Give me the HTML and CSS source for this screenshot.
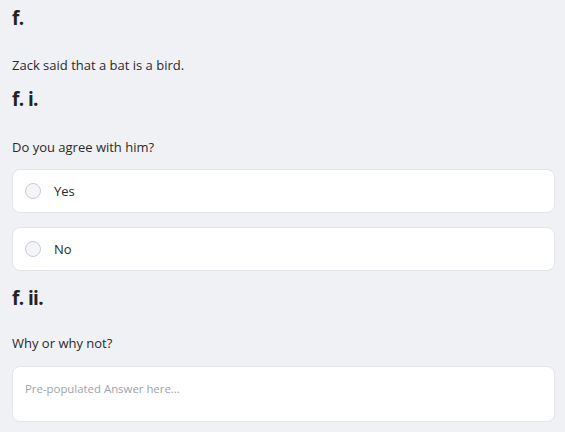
FILE: index.html
```html
<!DOCTYPE html>
<html>
<head>
<meta charset="utf-8">
<link rel="stylesheet" href="styles.css">
</head>
<body>
<div class="page">
  <h2 class="label">f.</h2>
  <p class="text text-intro">Zack said that a bat is a bird.</p>
  <h2 class="label label-sub">f. i.</h2>
  <p class="text text-q">Do you agree with him?</p>
  <div class="options">
    <label class="option"><span class="radio"></span><span class="opt-text">Yes</span></label>
    <label class="option"><span class="radio"></span><span class="opt-text">No</span></label>
  </div>
  <h2 class="label label-sub2">f. ii.</h2>
  <p class="text text-q2">Why or why not?</p>
  <div class="answer"><span class="placeholder">Pre-populated Answer here...</span></div>
</div>
</body>
</html>
```
FILE: styles.css
```css
html, body {
  margin: 0;
  padding: 0;
  background: #f0f1f5;
}
body {
  font-family: "Open Sans", "Noto Sans", sans-serif;
  color: #2a2a2a;
}
.page {
  padding: 4px 10px 0 12px;
}
.label {
  margin: 0;
  font-size: 19px;
  line-height: 28px;
  font-weight: 700;
  letter-spacing: -0.6px;
  color: #222;
}
.label-sub { margin-top: 10px; }
.label-sub2 { margin-top: 13px; }
.text {
  margin: 0;
  font-size: 13px;
  line-height: 20px;
}
.text-intro { margin-top: 23px; }
.text-q { margin-top: 24px; }
.text-q2 { margin-top: 21px; }
.options {
  margin-top: 12px;
  display: flex;
  flex-direction: column;
  gap: 14px;
}
.option {
  display: flex;
  align-items: center;
  height: 44px;
  box-sizing: border-box;
  padding-left: 12px;
  background: #fff;
  border: 1px solid #e3e5ea;
  border-radius: 8px;
}
.radio {
  width: 16px;
  height: 16px;
  box-sizing: border-box;
  border: 1px solid #c9ccd3;
  border-radius: 50%;
  background: #f4f5f8;
}
.opt-text {
  margin-left: 13px;
  font-size: 13px;
}
.answer {
  margin-top: 13px;
  height: 56px;
  box-sizing: border-box;
  background: #fff;
  border: 1px solid #e3e5ea;
  border-radius: 8px;
  padding: 9px 12px;
}
.placeholder {
  font-size: 11.4px;
  line-height: 16px;
  color: #9ea3ad;
}
```
